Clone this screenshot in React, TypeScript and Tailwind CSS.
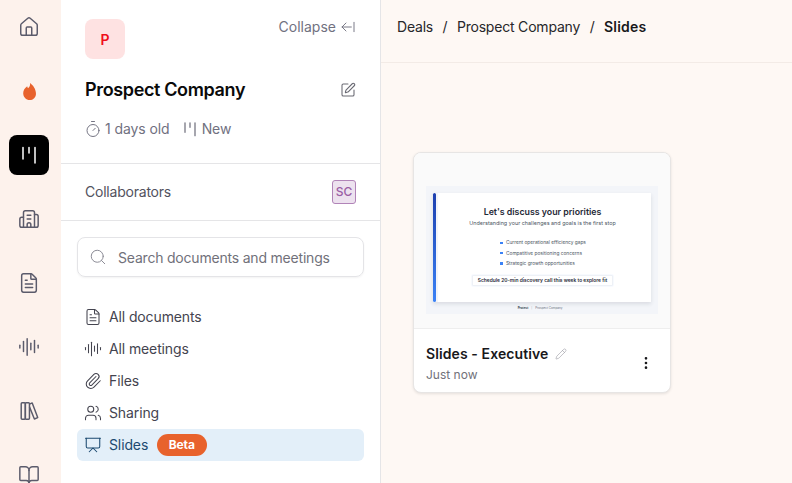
import { Home, FileText, AudioLines, BookOpen, Building2, Pencil, EllipsisVertical, Presentation, Users, Paperclip, Search, Timer, SquarePen, ArrowLeftFromLine } from "lucide-react";

function Pipeline({ className }: { className?: string }) {
  return (
    <svg viewBox="0 0 24 24" fill="none" stroke="currentColor" strokeWidth="1.5" strokeLinecap="round" className={className}>
      <path d="M6 4.500v11.500M12 4.500v5.500M18 4.500v15.500" />
    </svg>
  );
}

function Flame() {
  return (
    <svg viewBox="0 0 24 24" className="w-[21px] h-[21px] text-[#e8622c]" fill="currentColor">
      <path d="M12.6 2.2c.5 3-.8 4.600-2.300 6.200-.5-.8-.8-1.500-.9-2.400C6.600 8 4.800 10.600 4.800 14c0 4.300 3.300 7.800 7.400 7.800s7.200-3.200 7.200-7.300c0-5.400-3.400-9.800-6.800-12.300z" />
    </svg>
  );
}

function Books() {
  return (
    <svg viewBox="0 0 24 24" className="w-[22px] h-[22px]" fill="none" stroke="currentColor" strokeWidth="1.6" strokeLinejoin="round">
      <rect x="3.500" y="3" width="4.500" height="18" rx="1" />
      <rect x="8" y="3" width="4.500" height="18" rx="1" />
      <path d="M12.500 4.500l3-1.300 6 16-3.600 1.500-5.400-13.200" />
    </svg>
  );
}

const railCls = "w-[40px] h-[40px] shrink-0 flex items-center justify-center text-[#5b5b6b]";

function Rail() {
  return (
    <div className="w-[61px] shrink-0 h-full bg-[#fdf2ec] flex flex-col items-start pl-[9px] gap-[24px] pt-[7px] overflow-hidden">
      <div className={railCls}><Home size={22} strokeWidth={1.6} /></div>
      <div className={railCls}><Flame /></div>
      <div className={`${railCls} bg-black rounded-[8px] !text-white`}><Pipeline className="w-[24px] h-[24px]" /></div>
      <div className={railCls}><Building2 size={22} strokeWidth={1.6} /></div>
      <div className={railCls}><FileText size={22} strokeWidth={1.6} /></div>
      <div className={railCls}><AudioLines size={22} strokeWidth={1.6} /></div>
      <div className={railCls}><Books /></div>
      <div className={railCls}><BookOpen size={22} strokeWidth={1.6} /></div>
    </div>
  );
}

function NavItem({ icon, label, active, badge }: { icon: React.ReactNode; label: string; active?: boolean; badge?: boolean }) {
  return (
    <div className={`h-[32px] flex items-center pl-[7px] rounded-[6px] ${active ? "bg-[#e3eff9] text-[#1c4a70]" : "text-[#44444f]"}`}>
      <div className="w-[18px] h-[18px] flex items-center justify-center">{icon}</div>
      <span className="ml-[7px] text-[14px] leading-[20px] tracking-[-0.12px]">{label}</span>
      {badge && (
        <span className="ml-[8.500px] h-[22px] px-[12px] rounded-full bg-[#e8622c] text-white text-[12px] font-bold tracking-[-0.1px] flex items-center">Beta</span>
      )}
    </div>
  );
}

function Sidebar() {
  return (
    <div className="w-[320px] shrink-0 h-full bg-white border-r border-[#e5e5e7] flex flex-col overflow-hidden">
      <div className="h-[164px] shrink-0 border-b border-[#e5e5e7] px-[24px] pt-[19px] flex flex-col">
        <div className="flex justify-between items-start">
          <div className="w-[40px] h-[40px] rounded-[8px] bg-[#fee2e2] flex items-center justify-center text-[#ef0f1a] text-[14px] font-semibold">P</div>
          <div className="flex items-center gap-[4px] text-[#71717f] text-[14px] leading-[16px]">
            <span>Collapse</span>
            <ArrowLeftFromLine size={16} strokeWidth={1.4} />
          </div>
        </div>
        <div className="flex justify-between items-center mt-[18px] h-[26px]">
          <span className="text-[18px] font-semibold text-[#0a0a0a] leading-[26px] tracking-[-0.36px]">Prospect Company</span>
          <SquarePen size={16} strokeWidth={1.6} className="text-[#6a6a73]" />
        </div>
        <div className="flex items-center mt-[16px] h-[20px] text-[14px] text-[#71717f] leading-[20px] tracking-[-0.08px]">
          <Timer size={18} strokeWidth={1.3} className="-ml-[1px]" />
          <span className="ml-[3px]">1 days old</span>
          <Pipeline className="w-[20px] h-[20px] ml-[10px]" />
          <span className="ml-[2px]">New</span>
        </div>
      </div>
      <div className="h-[57px] shrink-0 border-b border-[#e5e5e7] px-[24px] flex items-center justify-between">
        <span className="text-[14px] text-[#52525e] tracking-[-0.22px] mb-[1px]">Collaborators</span>
        <div className="w-[24px] h-[24px] rounded-[3px] bg-[#ede2ef] border border-[#b184b8] text-[#9a5ea5] text-[12px] font-medium flex items-center justify-center">SC</div>
      </div>
      <div className="px-[16px] pt-[16px]">
        <div className="h-[40px] rounded-[8px] border border-[#e4e4e7] shadow-[0_1px_2px_rgba(0,0,0,0.05)] flex items-center pl-[11px]">
          <Search size={18} strokeWidth={1.3} className="text-[#8a8a94]" />
          <span className="ml-[11px] text-[14px] text-[#71717a] tracking-[-0.2px]">Search documents and meetings</span>
        </div>
        <div className="mt-[24px] flex flex-col">
          <NavItem icon={<FileText size={18} strokeWidth={1.4} />} label="All documents" />
          <NavItem icon={<AudioLines size={18} strokeWidth={1.4} />} label="All meetings" />
          <NavItem icon={<Paperclip size={18} strokeWidth={1.4} />} label="Files" />
          <NavItem icon={<Users size={18} strokeWidth={1.4} />} label="Sharing" />
          <NavItem icon={<Presentation size={18} strokeWidth={1.4} />} label="Slides" active badge />
        </div>
      </div>
    </div>
  );
}

function SlideThumb() {
  return (
    <div className="w-[232px] h-[128px] bg-[#f3f5f9] pt-[7px] px-[7px] flex flex-col items-stretch">
      <div className="h-[109px] flex bg-white shadow-[0_2px_4px_rgba(30,40,60,0.12)]">
        <div className="w-[3px] rounded-[2px] bg-gradient-to-b from-[#1e40af] to-[#3b82f6]"></div>
        <div className="w-[2px] bg-[#f3f5f9]"></div>
        <div className="flex-1 flex flex-col items-center pt-[13px] pr-[4px]">
          <div className="text-[8.8px] leading-[11px] font-semibold text-[#1f2937]">Let's discuss your priorities</div>
          <div className="text-[5.45px] leading-[8px] mt-[2px] text-[#4b5563]">Understanding your challenges and goals is the first stop</div>
          <div className="mt-[12px] self-start ml-[62px] flex flex-col gap-[2.2px]">
            {["Current operational efficiency gaps", "Compatitive positioning concerns", "Strategic growth opportunities"].map((t) => (
              <div key={t} className="flex items-center h-[8px] text-[4.8px] text-[#4b5563]">
                <span className="w-[2.500px] h-[2.500px] bg-[#3b82f6] mr-[3.500px]"></span>{t}
              </div>
            ))}
          </div>
          <div className="mt-[8px] h-[11px] px-[5px] flex items-center border border-[#eef1f6] rounded-[1px] text-[4.9px] font-semibold text-[#1f2937] shadow-[0_0_1px_rgba(59,130,246,0.4)]">
            Schedule 20-min discovery call this week to explore fit
          </div>
        </div>
      </div>
      <div className="flex-1 flex items-center justify-center gap-[3px] text-[3px] pr-[4px]">
        <span className="font-bold text-[#374151]">Protect</span>
        <span className="text-[#9ca3af]">|</span>
        <span className="text-[#6b7280]">Prospect Company</span>
      </div>
    </div>
  );
}

export default function App() {
  return (
    <div className="w-[792px] h-[483px] flex overflow-hidden bg-[#fef8f4]" style={{ fontFamily: "Inter, sans-serif" }}>
      <Rail />
      <Sidebar />
      <div className="flex-1 flex flex-col min-w-0">
        <div className="h-[63px] shrink-0 border-b border-[#f3ebe6] flex items-center pl-[16px] pb-[9px] text-[14px] text-[#27272a] tracking-[-0.2px]">
          <span>Deals</span>
          <span className="mx-[9.500px]">/</span>
          <span>Prospect Company</span>
          <span className="mx-[9.500px]">/</span>
          <span className="font-semibold text-[#18181b] tracking-[0.2px]">Slides</span>
        </div>
        <div className="pl-[32px] pt-[89px]">
          <div className="w-[258px] h-[241px] bg-white border border-[#e7e5e4] rounded-[8px] shadow-[0_1px_3px_rgba(0,0,0,0.1)] overflow-hidden">
            <div className="h-[176px] bg-[#fafafa] border-b border-[#eeeeee] pt-[33px] px-[12px]">
              <SlideThumb />
            </div>
            <div className="px-[12px] pt-[16px] flex items-start justify-between">
              <div className="flex flex-col">
                <div className="flex items-center gap-[6px]">
                  <span className="text-[14px] leading-[18px] font-semibold text-[#18181b] tracking-[0.1px]">Slides - Executive</span>
                  <Pencil size={12} strokeWidth={1.2} className="text-[#9a9aa3]" />
                </div>
                <span className="mt-[4px] text-[12px] leading-[16px] text-[#71717a]">Just now</span>
              </div>
              <EllipsisVertical size={16} strokeWidth={2} className="text-[#18181b] mt-[10px] mr-[4px]" />
            </div>
          </div>
        </div>
      </div>
    </div>
  );
}
